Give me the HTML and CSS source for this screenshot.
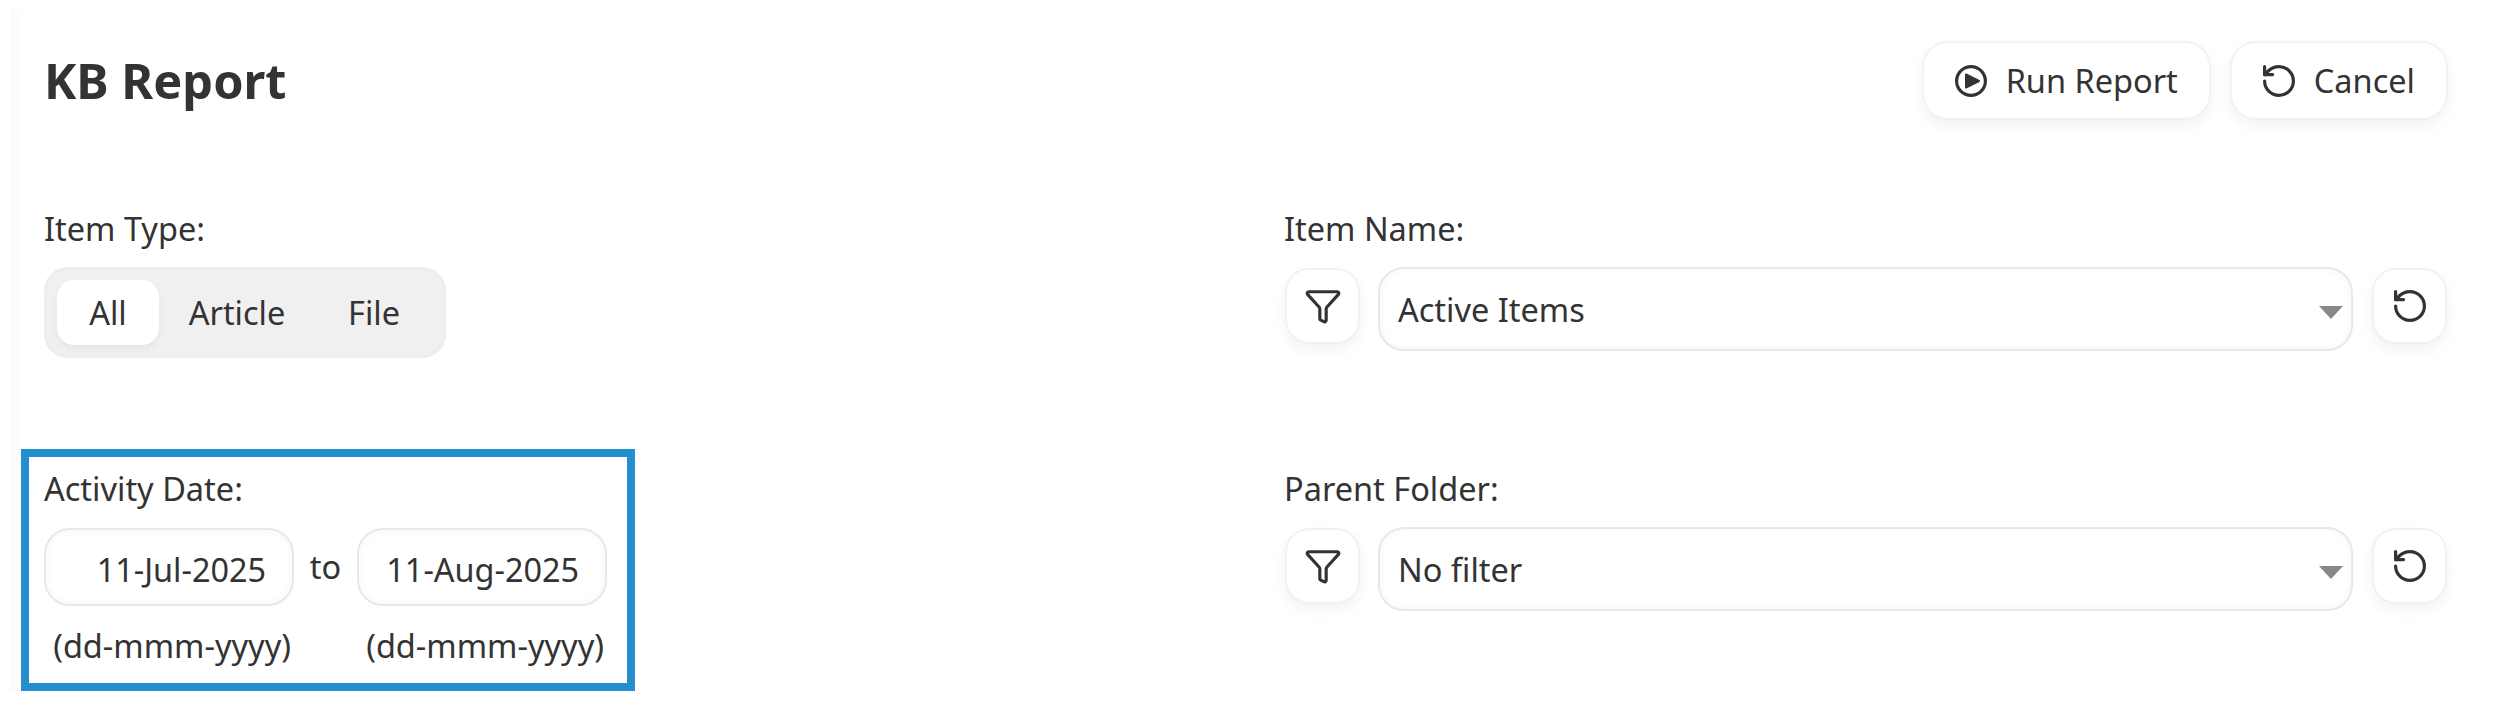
FILE: index.html
```html
<!DOCTYPE html>
<html lang="en">
<head>
<meta charset="utf-8">
<title>KB Report</title>
<link rel="stylesheet" href="styles.css">
</head>
<body>
<div class="strip"></div>
<main class="page">
  <header class="head">
    <h1 class="title">KB Report</h1>
    <div class="actions">
      <button class="btn">
        <svg class="ico" viewBox="0 0 32 32"><circle cx="16" cy="16" r="14.4" class="ln2"/><path d="M11 9.5 24 16 11 22.5z" class="fl"/></svg>
        <span>Run Report</span>
      </button>
      <button class="btn">
        <svg class="ico" viewBox="2 2 20 20"><path d="M3 12a9 9 0 1 0 9-9 9.75 9.75 0 0 0-6.74 2.74L3 8" class="ln"/><path d="M3 3v5h5" class="ln"/></svg>
        <span>Cancel</span>
      </button>
    </div>
  </header>
  <div class="grid">
    <section class="field">
      <div class="label">Item Type:</div>
      <div class="seg">
        <span class="opt on">All</span>
        <span class="opt o2">Article</span>
        <span class="opt o3">File</span>
      </div>
    </section>
    <section class="field">
      <div class="label">Item Name:</div>
      <div class="row">
        <button class="sq"><svg class="ico-f" viewBox="0 0 24 24"><path d="M10 20a1 1 0 0 0 .553.895l2 1A1 1 0 0 0 14 21v-7a2 2 0 0 1 .517-1.341L21.74 4.67A1 1 0 0 0 21 3H3a1 1 0 0 0-.742 1.67l7.225 7.989A2 2 0 0 1 10 14z" class="ln"/></svg></button>
        <div class="select"><span>Active Items</span><i class="arrow"></i></div>
        <button class="sq reset"><svg class="ico" viewBox="2 2 20 20"><path d="M3 12a9 9 0 1 0 9-9 9.75 9.75 0 0 0-6.74 2.74L3 8" class="ln"/><path d="M3 3v5h5" class="ln"/></svg></button>
      </div>
    </section>
    <section class="field dates">
      <div class="label">Activity Date:</div>
      <div class="daterow">
        <div class="dcol"><div class="date">11-Jul-2025</div><div class="hint">(dd-mmm-yyyy)</div></div>
        <span class="to">to</span>
        <div class="dcol"><div class="date">11-Aug-2025</div><div class="hint">(dd-mmm-yyyy)</div></div>
      </div>
    </section>
    <section class="field lower">
      <div class="label">Parent Folder:</div>
      <div class="row">
        <button class="sq"><svg class="ico-f" viewBox="0 0 24 24"><path d="M10 20a1 1 0 0 0 .553.895l2 1A1 1 0 0 0 14 21v-7a2 2 0 0 1 .517-1.341L21.74 4.67A1 1 0 0 0 21 3H3a1 1 0 0 0-.742 1.67l7.225 7.989A2 2 0 0 1 10 14z" class="ln"/></svg></button>
        <div class="select"><span>No filter</span><i class="arrow"></i></div>
        <button class="sq reset"><svg class="ico" viewBox="2 2 20 20"><path d="M3 12a9 9 0 1 0 9-9 9.75 9.75 0 0 0-6.74 2.74L3 8" class="ln"/><path d="M3 3v5h5" class="ln"/></svg></button>
      </div>
    </section>
  </div>
</main>
</body>
</html>
```
FILE: styles.css
```css
* { box-sizing: border-box; }
html, body { margin: 0; height: 100%; background: #fff; overflow: hidden; }
body { font-family: "Noto Sans", sans-serif; color: #333; font-size: 32.5px; position: relative; }
.strip { position: absolute; left: 11px; top: 10px; bottom: 10px; width: 13px; background: linear-gradient(to right, #fafafa, #fff); }
.page { position: relative; padding: 41px 54px 0 44px; }
.head { display: flex; justify-content: space-between; align-items: center; height: 79px; }
.title { margin: -2px 0 0; font-size: 48.7px; font-weight: 700; line-height: 60px; color: #333; }
.actions { display: flex; gap: 19px; }
button { font: inherit; color: inherit; background: #fff; cursor: pointer; }
.btn { height: 79px; padding: 0 31px; display: flex; align-items: center; gap: 19px; border: 2px solid #f2f2f2; border-radius: 26px; box-shadow: 0 6px 14px rgba(0,0,0,.05); }
.ico { width: 32px; height: 32px; display: block; }
.ico-f { width: 38px; height: 38px; display: block; }
.ln { fill: none; stroke: #333; stroke-width: 2; stroke-linejoin: round; stroke-linecap: round; }
.ln2 { fill: none; stroke: #333; stroke-width: 3.2; }
.fl { fill: #333; stroke: #333; stroke-width: 2; stroke-linejoin: round; }
.grid { display: grid; grid-template-columns: 1240px 1fr; row-gap: 91px; margin-top: 87px; }
.field { min-width: 0; }
.lower { padding-top: 18px; }
.label { line-height: 44px; color: #333; }
.seg { width: 402px; height: 91px; margin-top: 16px; padding: 13px; background: #f0f0f0; border-radius: 24px; display: flex; align-items: center; box-shadow: inset 0 0 6px rgba(0,0,0,.04); }
.opt { height: 65px; line-height: 65px; text-align: center; flex: none; }
.opt.on { width: 102px; background: #fff; border-radius: 17px; box-shadow: 0 3px 6px rgba(0,0,0,.06); }
.o2 { width: 156px; }
.o3 { width: 118px; }
.row { display: flex; gap: 18px; margin: 17px 1px 0; align-items: flex-start; }
.sq { width: 75px; height: 76px; padding: 0; display: flex; align-items: center; justify-content: center; flex: none; border: 2px solid #f2f2f2; border-radius: 24px; box-shadow: 0 6px 14px rgba(0,0,0,.05); }
.reset { margin-left: 1px; }
.select { flex: 1; height: 84px; margin-top: -1px; padding: 0 18px; border: 2px solid #e8e8e8; border-radius: 26px; display: flex; align-items: center; justify-content: space-between; box-shadow: inset 0 0 8px rgba(0,0,0,.04); }
.arrow { width: 0; height: 0; border-left: 12px solid transparent; border-right: 12px solid transparent; border-top: 13px solid #888; margin: 6px -10px 0 0; }
.dates { margin-left: -23px; width: 614px; padding: 10px 0 15px 15px; border: 8px solid #258ecf; }
.daterow { display: flex; align-items: flex-start; margin-top: 17px; }
.date { width: 250px; height: 78px; padding: 4px 26px 0 0; border: 2px solid #e8e8e8; border-radius: 26px; font-size: 32.4px; line-height: 70px; text-align: right; box-shadow: inset 0 0 8px rgba(0,0,0,.04); }
.hint { margin-top: 18px; padding-right: 3px; text-align: right; line-height: 44px; }
.to { width: 63px; text-align: center; line-height: 78px; }
```
